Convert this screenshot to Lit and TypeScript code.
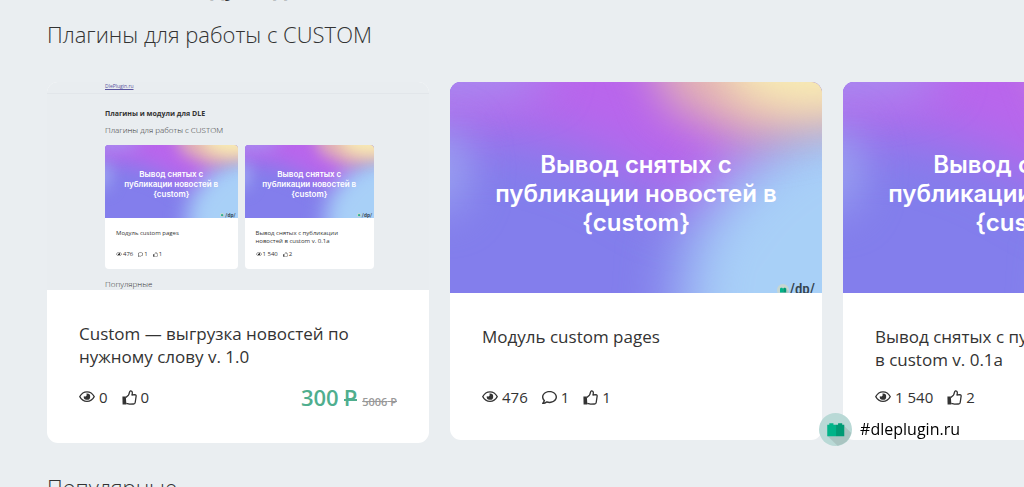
import { LitElement, html, css, svg, nothing } from "lit";
import { customElement, property } from "lit/decorators.js";

const brick = svg`
  <circle class="disc" cx="16" cy="16" r="16" fill="#b9d9d6"/>
  <path class="shade" d="M8 22 L24 12 L31.300 19.500 A16 16 0 0 1 18 31.800 Z" fill="#a9c4c1"/>
  <path d="M8 11.500h2V10h4v1.500h2.500V22.500H8z" fill="#00b388"/>
  <path d="M16.500 11.500h2V10h4v1.500h2V22.500h-8z" fill="#009a74"/>`;

const icons = {
  eye: html`<svg class="icon wide" viewBox="0 0 17 12" aria-hidden="true">
    <path d="M.8 6C2.600 2.600 5.300.9 8.500.9S14.400 2.600 16.200 6c-1.800 3.400-4.500 5.100-7.700 5.100S2.600 9.400.8 6z" fill="none" stroke="currentColor" stroke-width="1.300"/>
    <path d="M8.500 2.600a3.400 3.400 0 1 1-3.300 2.600A1.700 1.700 0 0 0 7.700 2.800z" fill="currentColor"/>
  </svg>`,
  comment: html`<svg class="icon" viewBox="0 0 512 512" aria-hidden="true">
    <path fill="currentColor" d="M256 32C114.6 32 0 125.1 0 240c0 47.600 19.900 91.200 52.900 126.300C38 405.700 7 439.100 6.500 439.500c-6.600 7-8.400 17.200-4.600 26S14.400 480 24 480c61.500 0 110-25.700 139.100-46.300C192 442.800 223.200 448 256 448c141.400 0 256-93.100 256-208S397.400 32 256 32zm0 368c-26.700 0-53.100-4.100-78.400-12.100l-22.700-7.200-19.500 13.800c-14.300 10.100-33.900 21.400-57.500 29 7.300-12.100 14.400-25.700 19.900-40.200l10.600-28.100-20.600-21.800C69.700 314.100 48 282.200 48 240c0-88.200 93.300-160 208-160s208 71.800 208 160-93.300 160-208 160z"/>
  </svg>`,
  like: html`<svg class="icon" viewBox="0 0 15 15" aria-hidden="true">
    <path d="M.4 6.600h3.400l.6 7.800H.6z" fill="currentColor"/>
    <path d="M3.800 7.400 6.400 5.200C7.500 3.900 7.100 1.200 8.500.8c1.900-.2 2.200 2 1.400 4.200l3-.4c.9 0 1.400.8 1.200 1.700l-.9 6.200c-.1.900-.8 1.500-1.700 1.500l-3.900.2-3.300-.8" fill="none" stroke="currentColor" stroke-width="1.300" stroke-linejoin="round"/>
  </svg>`,
};

interface Product {
  title: string;
  views: string;
  comments?: string;
  likes: string;
  price?: string;
  oldPrice?: string;
}

const modulePages: Product = { title: "Модуль custom pages", views: "476", comments: "1", likes: "1" };
const unpublished: Product = { title: "Вывод снятых с публикации новостей в custom v. 0.1a", views: "1 540", likes: "2" };
const wordFeed: Product = {
  title: "Custom — выгрузка новостей по нужному слову v. 1.0",
  views: "0",
  likes: "0",
  price: "300",
  oldPrice: "5006",
};

@customElement("product-stats")
export class ProductStats extends LitElement {
  @property({ attribute: false }) product!: Product;

  static styles = css`
    :host { display: flex; align-items: center; gap: var(--stat-gap, 14px); }
    .stat { display: flex; align-items: center; gap: var(--stat-inner, 4px); white-space: nowrap; }
    .icon { display: block; width: var(--icon-size, 15px); height: var(--icon-size, 15px); }
    .icon.wide { width: var(--icon-wide, 16px); height: auto; }
  `;

  render() {
    const { views, comments, likes } = this.product;
    return html`
      <span class="stat">${icons.eye}${views}</span>
      ${comments ? html`<span class="stat">${icons.comment}${comments}</span>` : nothing}
      <span class="stat">${icons.like}${likes}</span>
    `;
  }
}

@customElement("promo-banner")
export class PromoBanner extends LitElement {
  static styles = css`
    :host {
      position: relative;
      display: flex;
      align-items: center;
      justify-content: center;
      box-sizing: border-box;
      overflow: hidden;
      aspect-ratio: 372 / 211;
      padding-top: var(--banner-pad, 12px);
      color: #fff;
      font: 600 var(--banner-size, 24px) / var(--banner-line, 29px) Inter, "Open Sans", sans-serif;
      text-align: center;
      background: #837eec;
    }
    .wash { position: absolute; inset: 0; width: 100%; height: 100%; }
    .text { position: relative; }
    .mark {
      position: absolute;
      right: var(--mark-right, 7px);
      bottom: var(--mark-bottom, -4px);
      display: flex;
      align-items: center;
      gap: 1px;
      color: #33424d;
      font: 500 var(--mark-size, 15px) / 1 "Roboto Condensed", Roboto, sans-serif;
    }
    .mark .disc { fill: #c6d6d2; }
    .mark .shade { fill: #b4c8c6; }
    .logo { width: var(--mark-logo, 12px); height: var(--mark-logo, 12px); }
  `;

  render() {
    return html`
      <svg class="wash" viewBox="0 0 372 211" preserveAspectRatio="none" aria-hidden="true">
        <defs>
          <filter id="soft" filterUnits="userSpaceOnUse" x="-150" y="-150" width="700" height="520" color-interpolation-filters="sRGB"><feGaussianBlur stdDeviation="30" /></filter>
          <filter id="fine" filterUnits="userSpaceOnUse" x="-150" y="-150" width="700" height="520" color-interpolation-filters="sRGB"><feGaussianBlur stdDeviation="22" /></filter>
        </defs>
        <rect width="372" height="211" fill="#837eec" />
        <path filter="url(#soft)" fill="#b966ec" d="M-60 -110H320V90L240 126 150 76 70 50 -60 50z" />
        <ellipse filter="url(#fine)" fill="#a590f0" cx="10" cy="-8" rx="90" ry="24" />
        <ellipse filter="url(#fine)" fill="#9ea8f2" cx="-8" cy="88" rx="24" ry="42" />
        <path filter="url(#soft)" fill="#a8d0f7" d="M500 10 350 44 286 90 236 160 226 320H500z" />
        <path filter="url(#fine)" fill="#e3b2b4" d="M180 -80H440V34L300 60 220 26z" />
        <path filter="url(#fine)" fill="#f7ebb4" d="M256 -80H440V22L350 34 286 14z" />
      </svg>
      <div class="text">Вывод снятых с<br />публикации новостей в<br />{custom}</div>
      <div class="mark"><svg class="logo" viewBox="0 0 32 32" aria-hidden="true">${brick}</svg><span>/dp/</span></div>
    `;
  }
}

@customElement("site-preview")
export class SitePreview extends LitElement {
  static styles = css`
    :host {
      display: block;
      overflow: hidden;
      aspect-ratio: 382 / 208;
      color: #333;
      font-size: 6px;
      line-height: 8px;
      background: #e9edf0;
    }
    .top { padding: 0 58px 3px; border-bottom: 1px solid #e2e6ea; line-height: 8px; font-size: 5px; }
    .top a { color: #5b55a0; }
    .body { padding: 16px 55px 0 58px; }
    .title { font-size: 7px; line-height: 8px; font-weight: 700; }
    .sub { margin-top: 7px; font-size: 8px; line-height: 9px; font-weight: 300; }
    .grid { display: grid; grid-template-columns: 132fr 129fr; gap: 7px; margin: 11px 0 10px; }
    .tile {
      overflow: hidden;
      border-radius: 4px;
      background: #fff;
      --banner-size: 8px;
      --banner-line: 10px;
      --banner-pad: 4px;
      --mark-size: 6px;
      --mark-logo: 4px;
      --mark-right: 2px;
      --mark-bottom: 0px;
    }
    .tile promo-banner { aspect-ratio: auto; height: 73px; }
    .info {
      padding: 11px;
      --icon-size: 5px;
      --icon-wide: 6px;
      --stat-gap: 5px;
      --stat-inner: 1px;
    }
    .name { min-height: 16px; margin-bottom: 5px; }
  `;

  render() {
    return html`
      <div class="top"><a href="#">DlePlugin.ru</a></div>
      <div class="body">
        <div class="title">Плагины и модули для DLE</div>
        <div class="sub">Плагины для работы с CUSTOM</div>
        <div class="grid">
          ${[modulePages, unpublished].map(
            (p) => html`<div class="tile">
              <promo-banner></promo-banner>
              <div class="info">
                <div class="name">${p.title}</div>
                <product-stats .product=${p}></product-stats>
              </div>
            </div>`
          )}
        </div>
        <div class="sub">Популярные</div>
      </div>
    `;
  }
}

@customElement("product-card")
export class ProductCard extends LitElement {
  @property({ attribute: false }) product!: Product;

  static styles = css`
    :host { display: block; overflow: hidden; border-radius: 11px; background: #fff; }
    .info { padding: 32px 16px 29px 32px; }
    .title { min-height: 46px; margin: 0; font-size: 17px; line-height: 23px; font-weight: 400; }
    .foot {
      display: flex;
      align-items: center;
      justify-content: space-between;
      min-height: 28px;
      margin-top: 12px;
      padding-right: 16px;
      font-size: 15px;
      line-height: 24px;
    }
    .price {
      display: flex;
      align-items: baseline;
      gap: 5px;
      height: 34px;
      color: #4fae8e;
      font-size: 22px;
      line-height: 34px;
      font-weight: 600;
      white-space: nowrap;
    }
    .ruble { position: relative; }
    .ruble::after {
      content: "";
      position: absolute;
      left: 0;
      right: 0;
      bottom: 13px;
      height: 2px;
      background: currentColor;
    }
    .old { color: #999; font-size: 11px; }
  `;

  render() {
    const p = this.product;
    return html`
      <slot></slot>
      <div class="info">
        <h3 class="title">${p.title}</h3>
        <div class="foot">
          <product-stats .product=${p}></product-stats>
          ${p.price
            ? html`<div class="price"><span>${p.price}</span><span class="ruble">Р</span><s class="old">${p.oldPrice} Р</s></div>`
            : nothing}
        </div>
      </div>
    `;
  }
}

@customElement("app-root")
export class AppRoot extends LitElement {
  static styles = css`
    :host {
      display: block;
      height: 100vh;
      overflow: hidden;
      color: #333;
      font-family: "Open Sans", "Noto Sans", sans-serif;
      background: #eaeef1;
    }
    .page { padding-left: 47px; }
    .heading { margin: -30px 0 0; font-size: 22px; line-height: 34px; font-weight: 700; }
    .section { margin: 15px 0 32px; font-size: 22px; line-height: 31px; font-weight: 300; }
    .row + .section { margin-top: 29px; }
    .row {
      display: grid;
      grid-template-columns: minmax(382px, 38%) repeat(2, minmax(372px, 38%));
      align-items: start;
      gap: 21px;
      overflow: hidden;
    }
    .badge {
      position: fixed;
      right: 64px;
      bottom: 41px;
      display: flex;
      align-items: center;
      gap: 8px;
      color: #000;
      font-size: 16px;
      line-height: 33px;
      text-decoration: none;
    }
    .logo { width: 33px; height: 33px; }
  `;

  render() {
    return html`
      <main class="page">
        <h1 class="heading">Плагины и модули для DLE</h1>
        <h2 class="section">Плагины для работы с CUSTOM</h2>
        <div class="row">
          <product-card .product=${wordFeed}><site-preview></site-preview></product-card>
          <product-card .product=${modulePages}><promo-banner></promo-banner></product-card>
          <product-card .product=${unpublished}><promo-banner></promo-banner></product-card>
        </div>
        <h2 class="section">Популярные</h2>
      </main>
      <a class="badge" href="#"><svg class="logo" viewBox="0 0 32 32" aria-hidden="true">${brick}</svg>#dleplugin.ru</a>
    `;
  }
}
